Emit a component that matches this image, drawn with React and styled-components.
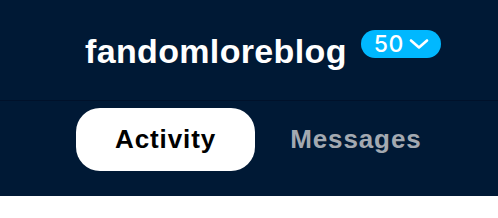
import React from 'react'
import styled, { createGlobalStyle } from 'styled-components'

const GlobalStyle = createGlobalStyle`
  body{
    margin: 0;
    background: #fff;
    font-family: "Liberation Sans", Arial, sans-serif;
  }
`

const Panel = styled.div`
  width: 100%;
  height: 196px;
  background-color: #001935;
`

const Header = styled.div`
  height: 101px;
  box-sizing: border-box;
  padding: 31px 0 0 85px;
  display: flex;
  align-items: flex-start;
  gap: 14px;
  border-bottom: 1px solid #00112a;
`

const BlogName = styled.div`
  color: #fff;
  font-size: 34px;
  line-height: 40px;
  font-weight: 700;
  letter-spacing: 0.35px;
`

const Badge = styled.div`
  margin-top: -1px;
  height: 28px;
  width: 80px;
  flex-shrink: 0;
  box-sizing: border-box;
  padding: 0 9px 0 13px;
  border-radius: 14px;
  background-color: #00b8ff;
  color: #fff;
  display: flex;
  align-items: center;
  gap: 5px;

  span{
    font-family: Inter, "Liberation Sans", sans-serif;
    font-size: 23px;
    font-weight: 500;
    letter-spacing: 0.5px;
    line-height: 28px;
  }
`

const Tabs = styled.div`
  display: flex;
  padding: 7px 0 0 76px;
`

const Tab = styled.div`
  height: 63px;
  padding: 0 ${({active}) => active ? '39px' : '35px'};
  border-radius: 24px;
  display: flex;
  align-items: center;
  font-size: 26px;
  font-weight: 700;
  letter-spacing: 0.9px;
  background-color: ${({active}) => active ? '#fff' : 'transparent'};
  color: ${({active}) => active ? '#000' : '#a3a9b1'};
  cursor: pointer;
`

const Chevron = () => (
  <svg width="20" height="10" viewBox="0 0 20 10">
    <polyline points="2,1.5 10,8.5 18,1.5" fill="none" stroke="#fff" strokeWidth="2.6" strokeLinecap="round" strokeLinejoin="round" />
  </svg>
)

const App = () => {
  return (
    <>
      <GlobalStyle/>
      <Panel>
        <Header>
          <BlogName>fandomloreblog</BlogName>
          <Badge>
            <span>50</span>
            <Chevron/>
          </Badge>
        </Header>
        <Tabs>
          <Tab active>Activity</Tab>
          <Tab>Messages</Tab>
        </Tabs>
      </Panel>
    </>
  )
}

export default App
